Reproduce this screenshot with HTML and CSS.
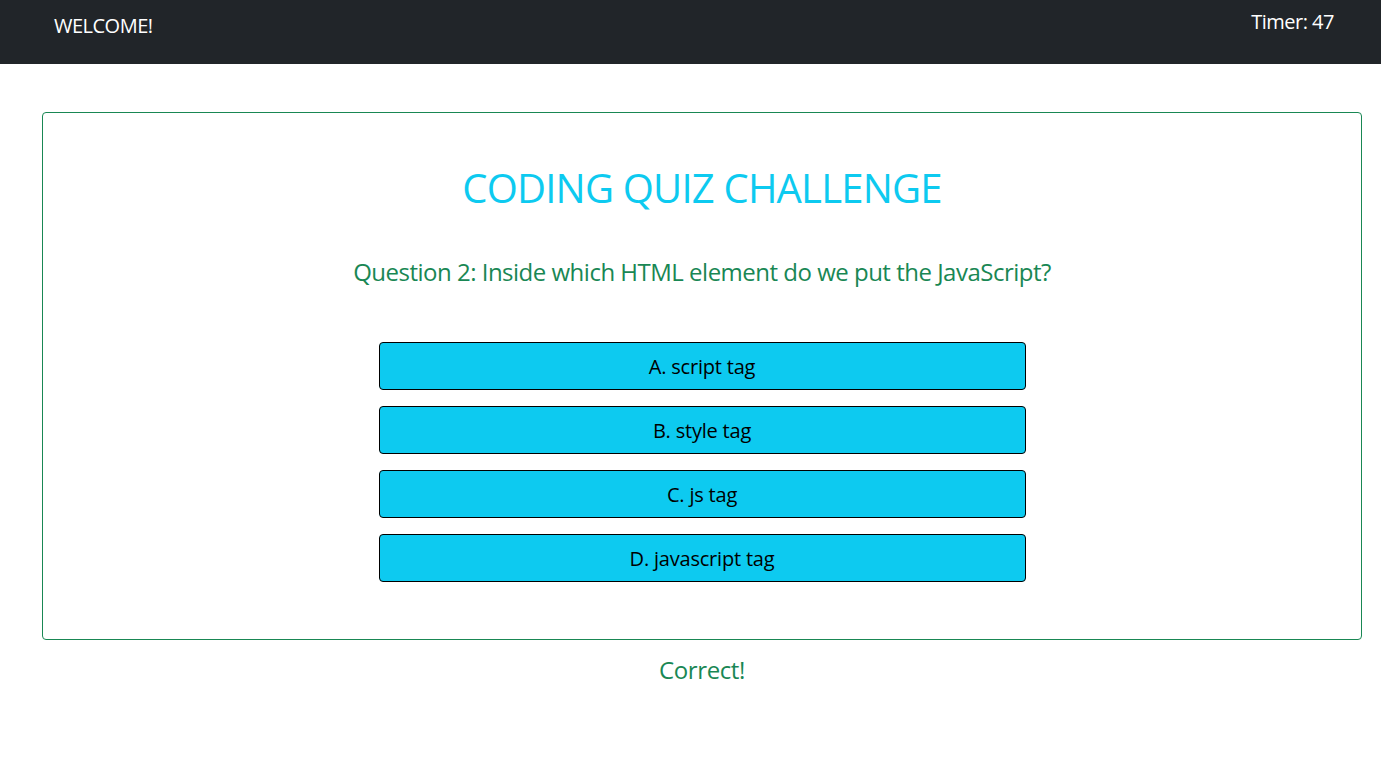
FILE: index.html
```html
<!DOCTYPE html>
<html lang="en">
<head>
<meta charset="utf-8">
<title>Coding Quiz Challenge</title>
<link rel="stylesheet" href="styles.css">
</head>
<body>
<header class="navbar">
  <span class="brand">WELCOME!</span>
  <span class="timer">Timer: 47</span>
</header>
<main class="quiz-card">
  <h1 class="quiz-title">CODING QUIZ CHALLENGE</h1>
  <h2 class="question">Question 2: Inside which HTML element do we put the JavaScript?</h2>
  <div class="answers">
    <button class="answer">A. script tag</button>
    <button class="answer">B. style tag</button>
    <button class="answer">C. js tag</button>
    <button class="answer">D. javascript tag</button>
  </div>
</main>
<p class="feedback">Correct!</p>
</body>
</html>
```

FILE: styles.css
```css
* { box-sizing: border-box; }
html, body { margin: 0; padding: 0; }
body {
  font-family: "Open Sans", "Noto Sans", sans-serif;
  background: #fff;
  color: #212529;
}
.navbar {
  height: 64px;
  background: #212529;
  display: flex;
  justify-content: space-between;
  align-items: flex-start;
  padding: 0 47px 0 54px;
  color: #fff;
  font-size: 20px;
  line-height: 30px;
  letter-spacing: -0.5px;
}
.brand { margin-top: 11px; }
.timer { margin-top: 7px; }
.quiz-card {
  margin: 48px 19px 0 42px;
  border: 1px solid #198754;
  border-radius: 4px;
  padding: 51px 0 57px;
  text-align: center;
}
.quiz-title {
  margin: 0;
  font-size: 40px;
  line-height: 48px;
  font-weight: 400;
  color: #0dcaf0;
  letter-spacing: -0.8px;
}
.question {
  margin: 42px 0 0;
  font-size: 24px;
  line-height: 36px;
  font-weight: 400;
  color: #198754;
  letter-spacing: -0.5px;
}
.answers {
  margin-top: 52px;
  display: flex;
  flex-direction: column;
  align-items: center;
  gap: 16px;
}
.answer {
  width: 647px;
  height: 48px;
  border: 1px solid #000;
  border-radius: 4px;
  background: #0dcaf0;
  color: #000;
  font-family: inherit;
  font-size: 20px;
  letter-spacing: -0.2px;
  padding: 0;
  cursor: pointer;
}
.feedback {
  margin: 12px 19px 0 42px;
  text-align: center;
  font-size: 24px;
  line-height: 36px;
  color: #198754;
  letter-spacing: -0.4px;
}
```
